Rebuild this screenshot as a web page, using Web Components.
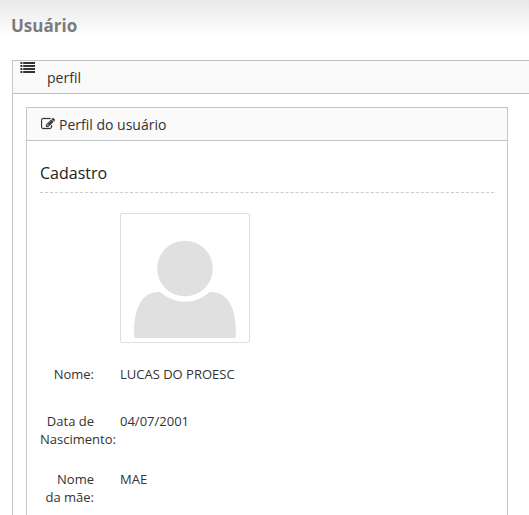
<!DOCTYPE html>
<html lang="pt-BR">
<head>
    <meta charset="UTF-8">
    <meta name="viewport" content="width=device-width, initial-scale=1.0">
    <title>Usuário</title>
    <style>
        body {
            margin: 0;
            background-color: #fff;
            color: #333;
            font-family: "Open Sans", "Liberation Sans", sans-serif;
            font-size: 13px;
            line-height: 18px;
        }
    </style>
</head>
<body>
    <user-page heading="Usuário">
        <panel-tab label="perfil">
            <panel-box label="Perfil do usuário">
                <form-section label="Cadastro">
                    <profile-row><user-avatar></user-avatar></profile-row>
                    <profile-row label="Nome:">LUCAS DO PROESC</profile-row>
                    <profile-row label="Data de Nascimento:">04/07/2001</profile-row>
                    <profile-row label="Nome da mãe:">MAE</profile-row>
                </form-section>
            </panel-box>
        </panel-tab>
    </user-page>

    <script>
        class BaseElement extends HTMLElement {
            constructor() {
                super();
                this.attachShadow({ mode: "open" });
            }

            connectedCallback() {
                const t = document.createElement("template");
                t.innerHTML = this.getTemplate(this.getAttribute("label") ?? "");
                this.shadowRoot.replaceChildren(t.content.cloneNode(true));
            }
        }

        class UserPage extends BaseElement {
            getTemplate() {
                return `
                    <style>
                        :host {
                            display: block;
                            min-height: 100vh;
                            background: linear-gradient(#e8e8e8, #fff 36px) no-repeat;
                        }
                        h1 {
                            margin: 0;
                            padding: 14px 11px 22px;
                            color: #7c7c7c;
                            font-size: 17px;
                            line-height: 24px;
                        }
                        main {
                            padding-left: 12px;
                        }
                    </style>
                    <header><h1>${this.getAttribute("heading")}</h1></header>
                    <main><slot></slot></main>
                `;
            }
        }

        /* Outer panel, it runs to the right edge of the window */
        class PanelTab extends BaseElement {
            getTemplate(label) {
                return `
                    <style>
                        :host {
                            display: block;
                            border: 1px solid #c8c8c8;
                            border-top-color: #c1c1c1;
                            border-right: 0;
                        }
                        header {
                            display: flex;
                            align-items: flex-start;
                            gap: 12px;
                            padding-left: 7px;
                            background-color: #fafafa;
                            border-bottom: 1px solid #c1c1c1;
                        }
                        svg {
                            width: 15px;
                            height: 14px;
                            fill: #333;
                        }
                        h2 {
                            margin: 0;
                            padding-top: 2px;
                            font-size: 14px;
                            font-weight: 400;
                            line-height: 30px;
                        }
                        .content {
                            padding: 13px 21px 0 13px;
                        }
                    </style>
                    <header>
                        <svg viewBox="0 0 15 14" aria-hidden="true">
                            <path d="M.4 1h2v2.1h-2zM3.2 1H15v2.1H3.2zM.4 4h2v2.1h-2zM3.2 4H15v2.1H3.2zM.4 7h2v2.1h-2zM3.2 7H15v2.1H3.2zM.4 10h2v2.1h-2zM3.2 10H15v2.1H3.2z"/>
                        </svg>
                        <h2>${label}</h2>
                    </header>
                    <div class="content"><slot></slot></div>
                `;
            }
        }

        class PanelBox extends BaseElement {
            getTemplate(label) {
                return `
                    <style>
                        :host {
                            display: block;
                            border: 1px solid #c8c8c8;
                            border-top-color: #c1c1c1;
                        }
                        header {
                            display: flex;
                            align-items: center;
                            gap: 4px;
                            padding-left: 14px;
                            background-color: #fafafa;
                            border-bottom: 1px solid #c1c1c1;
                        }
                        svg {
                            width: 14px;
                            height: 14px;
                            fill: #333;
                            stroke: #333;
                            stroke-width: 30;
                        }
                        h3 {
                            margin: 0;
                            padding-top: 2px;
                            font-size: 14px;
                            font-weight: 400;
                            line-height: 30px;
                        }
                        .content {
                            padding: 13px;
                        }
                    </style>
                    <header>
                        <svg viewBox="0 0 1792 1792" aria-hidden="true">
                            <path d="M888 1184l116-116-152-152-116 116v56h96v96h56zm440-720q-16-16-33 1l-350 350q-17 17-1 33t33-1l350-350q17-17 1-33zm80 594v190q0 119-84.5 203.5t-203.5 84.5h-832q-119 0-203.5-84.5t-84.5-203.5v-832q0-119 84.5-203.5t203.5-84.5h832q63 0 117 25 15 7 18 23 3 17-9 29l-49 49q-14 14-32 8-23-6-45-6h-832q-66 0-113 47t-47 113v832q0 66 47 113t113 47h832q66 0 113-47t47-113v-126q0-13 9-22l64-64q15-15 35-7t20 29zm-96-738l288 288-672 672h-288v-288zm444 132l-92 92-288-288 92-92q28-28 68-28t68 28l152 152q28 28 28 68t-28 68z"/>
                        </svg>
                        <h3>${label}</h3>
                    </header>
                    <div class="content"><slot></slot></div>
                `;
            }
        }

        class FormSection extends BaseElement {
            getTemplate(label) {
                return `
                    <style>
                        :host {
                            display: block;
                        }
                        h4 {
                            margin: 0 0 20px;
                            padding: 6px 0;
                            border-bottom: 1px dashed #ccc;
                            color: #222;
                            font-size: 16px;
                            font-weight: 400;
                            line-height: 26px;
                        }
                        .rows {
                            display: flex;
                            flex-direction: column;
                            gap: 22px;
                        }
                    </style>
                    <h4>${label}</h4>
                    <div class="rows"><slot></slot></div>
                `;
            }
        }

        class ProfileRow extends BaseElement {
            getTemplate(label) {
                return `
                    <style>
                        :host {
                            display: grid;
                            grid-template-columns: 54px 1fr;
                            column-gap: 26px;
                            min-height: 25px;
                        }
                        .label {
                            text-align: right;
                        }
                    </style>
                    <div class="label">${label}</div>
                    <div class="value"><slot></slot></div>
                `;
            }
        }

        class UserAvatar extends BaseElement {
            getTemplate() {
                return `
                    <style>
                        :host {
                            display: block;
                            box-sizing: border-box;
                            width: 130px;
                            height: 130px;
                            border: 1px solid #ddd;
                            border-radius: 2px;
                        }
                        svg {
                            display: block;
                            fill: #e0e0e0;
                        }
                    </style>
                    <svg width="128" height="128" viewBox="0 0 128 128" role="img" aria-label="Foto do usuário">
                        <circle cx="64" cy="54.5" r="27.8"/>
                        <path d="M13.5 124C11.5 97 20 77 39 78C55 91 73 91 89 78C108 77 116.500 97 114.500 124Z"/>
                    </svg>
                `;
            }
        }

        customElements.define("user-page", UserPage);
        customElements.define("panel-tab", PanelTab);
        customElements.define("panel-box", PanelBox);
        customElements.define("form-section", FormSection);
        customElements.define("profile-row", ProfileRow);
        customElements.define("user-avatar", UserAvatar);
    </script>
</body>
</html>
